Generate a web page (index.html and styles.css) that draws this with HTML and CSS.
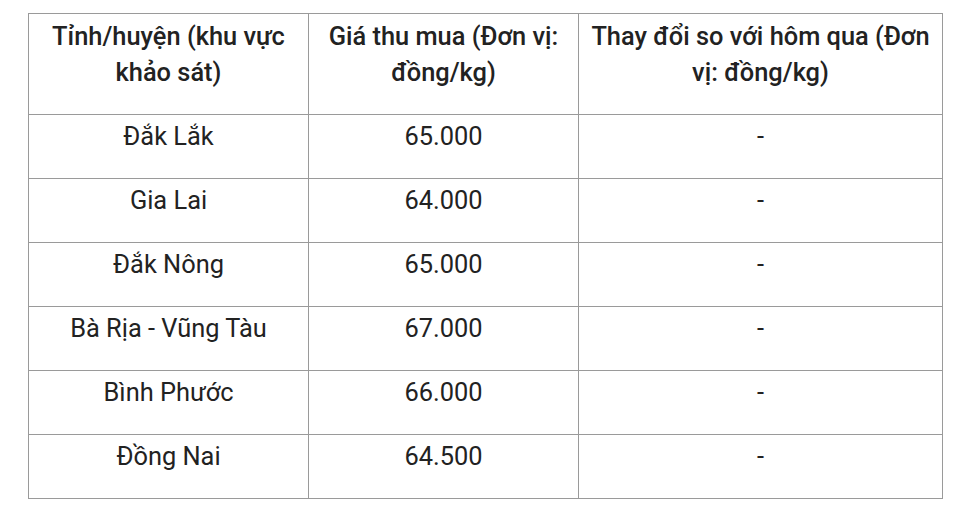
FILE: index.html
```html
<!DOCTYPE html>
<html lang="vi">
<head>
<meta charset="utf-8">
<link rel="stylesheet" href="styles.css">
</head>
<body>
<table class="price-table">
  <colgroup>
    <col class="c1">
    <col class="c2">
    <col class="c3">
  </colgroup>
  <thead>
    <tr>
      <th>Tỉnh/huyện (khu vực khảo sát)</th>
      <th>Giá thu mua (Đơn vị: đồng/kg)</th>
      <th>Thay đổi so với hôm qua (Đơn vị: đồng/kg)</th>
    </tr>
  </thead>
  <tbody>
    <tr><td>Đắk Lắk</td><td>65.000</td><td>-</td></tr>
    <tr><td>Gia Lai</td><td>64.000</td><td>-</td></tr>
    <tr><td>Đắk Nông</td><td>65.000</td><td>-</td></tr>
    <tr><td>Bà Rịa - Vũng Tàu</td><td>67.000</td><td>-</td></tr>
    <tr><td>Bình Phước</td><td>66.000</td><td>-</td></tr>
    <tr><td>Đồng Nai</td><td>64.500</td><td>-</td></tr>
  </tbody>
</table>
</body>
</html>
```
FILE: styles.css
```css
html, body {
  margin: 0;
  padding: 0;
  background: #fff;
}
body {
  padding: 13px 0 0 28px;
  font-family: Roboto, "Noto Sans", sans-serif;
  color: #222;
}
.price-table {
  border-collapse: collapse;
  table-layout: fixed;
  width: 914px;
}
.c1 { width: 280px; }
.c2 { width: 270px; }
.c3 { width: 364px; }
.price-table th,
.price-table td {
  border: 1px solid #9a9a9a;
  text-align: center;
  vertical-align: top;
  font-size: 25.4px;
  line-height: 36px;
  padding: 3px 6px 24px;
}
.price-table th {
  font-weight: 500;
  padding-top: 4px;
}
.price-table td {
  font-weight: 400;
}
```
